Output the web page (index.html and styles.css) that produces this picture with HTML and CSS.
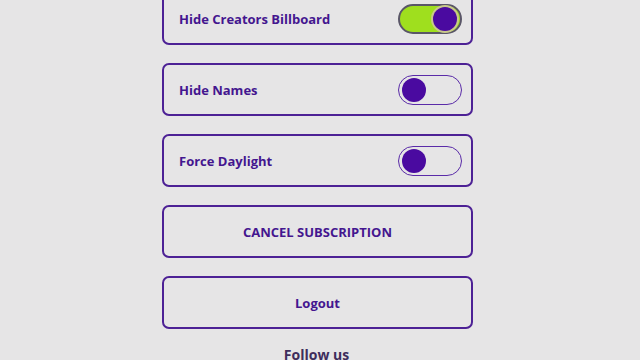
FILE: index.html
```html
<!DOCTYPE html>
<html>
<head>
<meta charset="utf-8">
<link rel="stylesheet" href="styles.css">
</head>
<body>
<div class="settings">
  <div class="card row">
    <span class="label">Hide Creators Billboard</span>
    <span class="toggle on"><span class="knob"></span></span>
  </div>
  <div class="card row">
    <span class="label">Hide Names</span>
    <span class="toggle"><span class="knob"></span></span>
  </div>
  <div class="card row">
    <span class="label">Force Daylight</span>
    <span class="toggle"><span class="knob"></span></span>
  </div>
  <div class="card button">CANCEL SUBSCRIPTION</div>
  <div class="card button">Logout</div>
  <div class="follow">Follow us</div>
</div>
</body>
</html>
```

FILE: styles.css
```css
html, body {
  margin: 0;
  padding: 0;
  background: #e6e5e6;
  height: 360px;
  overflow: hidden;
  font-family: "Open Sans", "DejaVu Sans", sans-serif;
}
.settings {
  width: 311px;
  margin-left: 162px;
  margin-top: -8px;
  display: flex;
  flex-direction: column;
  gap: 18px;
}
.card {
  box-sizing: border-box;
  height: 53px;
  border: 2px solid #4d2195;
  border-radius: 7px;
  display: flex;
  align-items: center;
  color: #44168f;
  font-weight: 700;
  font-size: 13px;
}
.row {
  justify-content: space-between;
  padding: 0 9px 0 15px;
}
.button {
  justify-content: center;
}
.toggle {
  box-sizing: border-box;
  width: 64px;
  height: 30px;
  border: 1.5px solid #5a2ba8;
  border-radius: 15px;
  display: flex;
  align-items: center;
  padding: 0 3px;
}
.knob {
  width: 24px;
  height: 24px;
  border-radius: 50%;
  background: #4a0aa0;
}
.toggle.on {
  background: #9fdf1e;
  border: 2px solid #5a5668;
  justify-content: flex-end;
}
.toggle.on .knob {
  box-shadow: 0 0 0 2px #c9c98a;
}
.follow {
  text-align: center;
  margin-top: -1px;
  margin-left: -2px;
  color: #3e2d5c;
  font-weight: 700;
  font-size: 14px;
  line-height: 18px;
}
```
